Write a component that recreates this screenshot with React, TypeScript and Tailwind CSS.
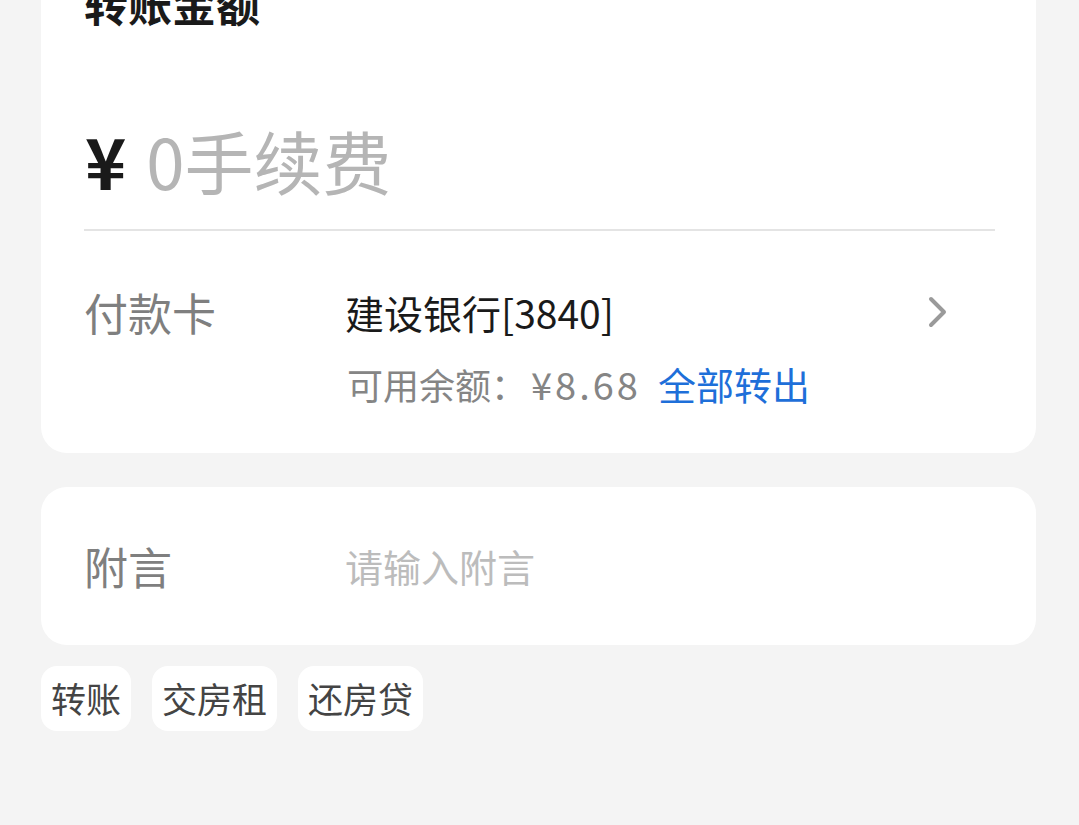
import React from "react";

const font = { fontFamily: '"Noto Sans CJK SC", "Noto Sans", sans-serif' };

function Chevron() {
  return (
    <svg width="20" height="32" viewBox="0 0 20 32" fill="none">
      <polyline
        points="3,3 16,16 3,29"
        stroke="#9a9a9a"
        strokeWidth="4"
        strokeLinecap="round"
        strokeLinejoin="round"
      />
    </svg>
  );
}

export default function App() {
  const tags = ["转账", "交房租", "还房贷"];
  return (
    <div className="min-h-screen bg-[#f4f4f4] pl-[41px] pr-[43px] overflow-hidden" style={font}>
      {/* amount card */}
      <div className="-mt-[30px] bg-white rounded-[26px] pl-[43px] pr-[41px] pt-[11px] pb-[47px]">
        <div className="h-[44px] leading-[44px] text-[44px] font-bold text-[#1a1a1a]">转账金额</div>
        <div className="mt-[95px] h-[80px] leading-[80px] text-[69px] whitespace-nowrap">
          <span className="text-[70px] font-bold text-[#1a1a1a] ml-[1px]">¥</span>
          <span className="ml-[20px] text-[69px] text-[#b5b5b5]">0手续费</span>
        </div>
        <div className="mt-[29px] h-[2px] bg-[#e4e4e4]" />
        <div className="mt-[59px] flex">
          <div className="w-[261px] h-[44px] leading-[44px] text-[44px] text-[#7f7f7f]">付款卡</div>
          <div className="flex-1 flex flex-col">
            <div className="flex items-center justify-between h-[44px] pr-[47px]">
              <span className="text-[39px] leading-[44px] text-[#1a1a1a]">建设银行[3840]</span>
              <Chevron />
            </div>
            <div className="mt-[28px] h-[44px] leading-[44px] text-[36px] text-[#858585] flex items-center whitespace-nowrap">
              <span className="ml-[2px]">可用余额：</span>
              <span className="ml-[4px] text-[38px] tracking-[3px]">¥8.68</span>
              <span className="ml-[17px] text-[38px] text-[#1e6fd9]">全部转出</span>
            </div>
          </div>
        </div>
      </div>

      {/* memo card */}
      <div className="mt-[34px] h-[158px] bg-white rounded-[26px] pl-[43px] pr-[41px] flex items-center">
        <div className="w-[261px] text-[44px] leading-[44px] text-[#7f7f7f]">附言</div>
        <div className="text-[38px] leading-[44px] text-[#bcbcbc]">请输入附言</div>
      </div>

      {/* quick tags */}
      <div className="mt-[21px] flex gap-[21px]">
        {tags.map((t) => (
          <div
            key={t}
            className="h-[65px] px-[10px] bg-white rounded-[16px] flex items-center text-[35px] text-[#444444]"
          >
            {t}
          </div>
        ))}
      </div>
    </div>
  );
}
